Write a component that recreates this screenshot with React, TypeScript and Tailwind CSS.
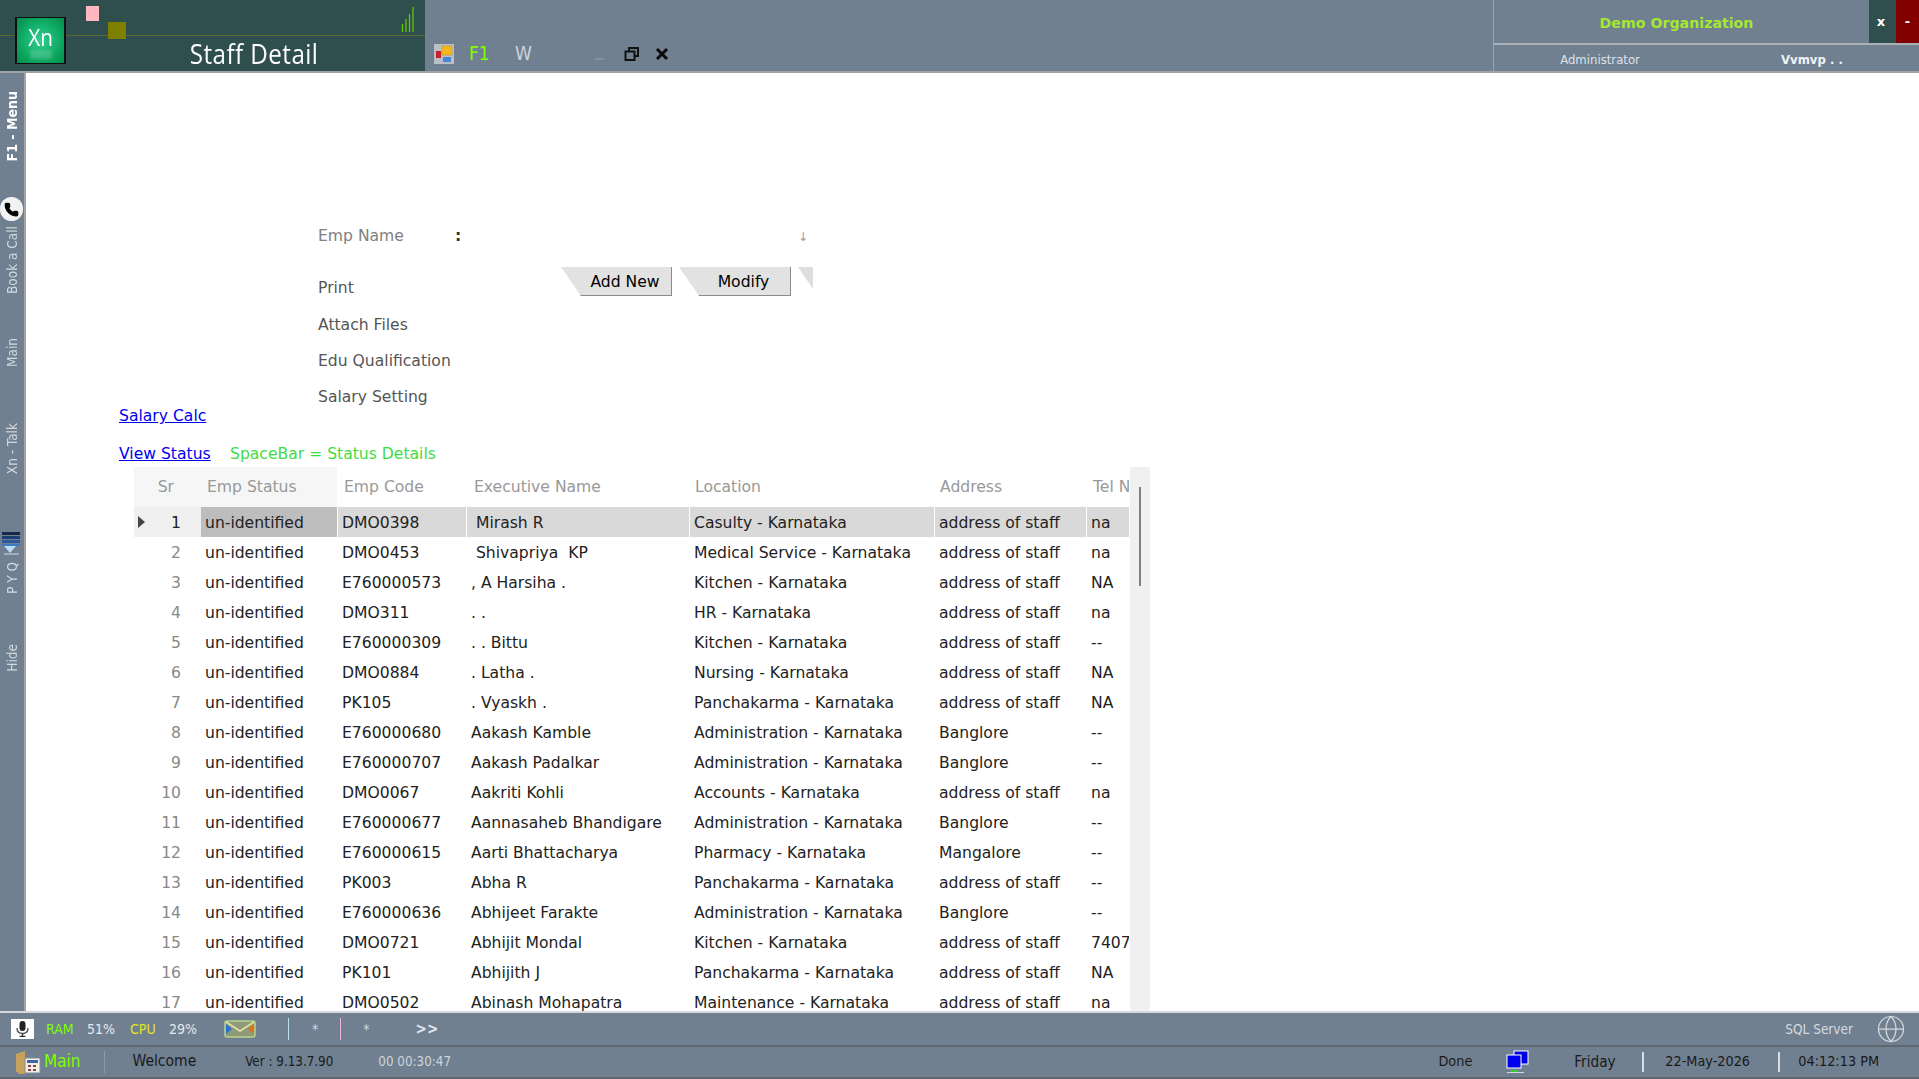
import { Globe, Phone } from "lucide-react";

const rows = [
  ["DMO0398", " Mirash R", "Casulty - Karnataka", "address of staff", "na"],
  ["DMO0453", " Shivapriya  KP", "Medical Service - Karnataka", "address of staff", "na"],
  ["E760000573", ", A Harsiha .", "Kitchen - Karnataka", "address of staff", "NA"],
  ["DMO311", ". .", "HR - Karnataka", "address of staff", "na"],
  ["E760000309", ". . Bittu", "Kitchen - Karnataka", "address of staff", "--"],
  ["DMO0884", ". Latha .", "Nursing - Karnataka", "address of staff", "NA"],
  ["PK105", ". Vyaskh .", "Panchakarma - Karnataka", "address of staff", "NA"],
  ["E760000680", "Aakash Kamble", "Administration - Karnataka", "Banglore", "--"],
  ["E760000707", "Aakash Padalkar", "Administration - Karnataka", "Banglore", "--"],
  ["DMO0067", "Aakriti Kohli", "Accounts - Karnataka", "address of staff", "na"],
  ["E760000677", "Aannasaheb Bhandigare", "Administration - Karnataka", "Banglore", "--"],
  ["E760000615", "Aarti Bhattacharya", "Pharmacy - Karnataka", "Mangalore", "--"],
  ["PK003", "Abha R", "Panchakarma - Karnataka", "address of staff", "--"],
  ["E760000636", "Abhijeet Farakte", "Administration - Karnataka", "Banglore", "--"],
  ["DMO0721", "Abhijit Mondal", "Kitchen - Karnataka", "address of staff", "7407"],
  ["PK101", "Abhijith J", "Panchakarma - Karnataka", "address of staff", "NA"],
  ["DMO0502", "Abinash Mohapatra", "Maintenance - Karnataka", "address of staff", "na"],
];

const colClass = "grid grid-cols-[67px_136px_1px_128px_1px_222px_1px_244px_1px_151px_1px_42px]";
const condensed = "font-['DejaVu_Sans_Condensed',sans-serif]";

function SideLabel({ text, h, bold }: { text: string; h: string; bold?: boolean }) {
  return (
    <div className={`flex items-center justify-center ${h}`}>
      <span className={`[writing-mode:vertical-rl] rotate-180 whitespace-pre ${condensed} ${bold ? "text-[14px] font-bold text-white" : "text-[13.5px] text-[#d3d8de]"}`}>
        {text}
      </span>
    </div>
  );
}

function SideRail() {
  return (
    <aside className="w-[26px] shrink-0 bg-[#708090] border-r-2 border-[#a3a3a3] flex flex-col">
      <SideLabel text="F1 - Menu" h="h-[106px]" bold />
      <div className="h-[18px] shrink-0" />
      <div className="h-[24px] shrink-0 w-[23px] rounded-full bg-[#f2f2f2] flex items-center justify-center">
        <Phone size={15} className="text-black fill-black" />
      </div>
      <SideLabel text="Book a Call" h="h-[72px] mt-[3px]" />
      <SideLabel text="Main" h="h-[72px] mt-[20px]" />
      <SideLabel text="Xn - Talk" h="h-[60px] mt-[31px]" />
      <svg width="20" height="23" viewBox="0 0 20 23" className="mt-[53px] ml-[1px] shrink-0">
        <path d="M1 0h18v3H1z" fill="#16294d" />
        <path d="M1 4h18v3H1z" fill="#1d3f73" />
        <path d="M1 8h18v3H1z" fill="#2a5a9c" />
        <path d="M1 12h18v2H1z" fill="#3f78bd" />
        <path d="M3 14h12l-6 7z" fill="#bcdcf5" />
        <path d="M3 22h15" stroke="#d5dbe2" strokeWidth="1" />
      </svg>
      <SideLabel text="P Y Q" h="h-[32px] mt-[7px]" />
      <SideLabel text="Hide" h="h-[30px] mt-[49px]" />
    </aside>
  );
}

function TopBar() {
  return (
    <header className="h-[73px] shrink-0 bg-[#708090] border-b-2 border-[#a3a3a3] flex relative">
      <div className="w-[425px] bg-[#2f4f4f] flex flex-col relative">
        <div className="h-[36px] border-b border-[#556b2f] flex items-start shrink-0">
          <div className="w-[86px]" />
          <div className="w-[13px] h-[15px] mt-[6px] bg-[#ffb6c1]" />
          <div className="w-[18px] h-[17px] ml-[9px] mt-[22px] bg-[#808000] relative" />
          <div className="ml-auto mr-[9px] mt-[6px]">
            <svg width="15" height="26" viewBox="0 0 15 26" fill="none" stroke="#66cc00" strokeWidth="1.2">
              <path d="M1.5 26V18M5 26V13M8.5 26V8M12 26V1" />
            </svg>
          </div>
        </div>
        <div className="flex-1 flex items-center justify-center pl-[84px]">
          <span className="text-white text-[27.5px] leading-none tracking-[0.5px] font-['Open_Sans',sans-serif] scale-x-[0.88] whitespace-nowrap">
            Staff Detail
          </span>
        </div>
        {/* logo lies over the line of the panel */}
        <div className="absolute left-[15px] top-[17px] w-[51px] h-[47px] border-x-2 border-y border-[#101010] bg-[radial-gradient(circle,#2fd08f_0%,#0aa35c_70%,#078a4c_100%)] flex flex-col items-center overflow-hidden">
          <span className="text-white text-[23px] leading-none mt-[8px] scale-x-90 font-['Open_Sans',sans-serif]">Xn</span>
          <div className="mt-[1px] w-[22px] h-[9px] bg-white/15 blur-[1px]" />
        </div>
      </div>

      <div className="flex items-center h-[71px] pt-[36px]">
        <svg width="20" height="20" viewBox="0 0 20 20" className="ml-[9px]">
          <rect width="20" height="20" fill="#b9bfc5" />
          <rect x="8" y="2" width="10" height="9" fill="#f2b91d" stroke="#c98a10" strokeWidth="0.5" />
          <rect x="2" y="7" width="5" height="7" fill="#c8202a" />
          <rect x="9" y="13" width="8" height="5" fill="#4a86d8" />
        </svg>
        <span className={`ml-[15px] w-[46px] text-[19px] text-[#7fff00] ${condensed}`}>F1</span>
        <span className={`w-[80px] text-[19px] text-[#cdd3da] ${condensed}`}>W</span>
        <div className="w-[9px] h-[2px] mt-[11px] bg-[#85909c]" />
        <svg width="16" height="16" viewBox="0 0 16 16" className="ml-[20px]" fill="none" stroke="#111" strokeWidth="2">
          <rect x="1.5" y="5.5" width="9" height="8.5" />
          <path d="M5 5V2h9v8h-3" />
        </svg>
        <svg width="14" height="14" viewBox="0 0 14 14" className="ml-[15px]" fill="none" stroke="#0a0a0a" strokeWidth="3">
          <path d="M2 2l10 10M12 2L2 12" />
        </svg>
      </div>

      <div className="ml-auto w-[426px] border-l border-[#c8a23f] flex flex-col h-[71px]">
        <div className="h-[45px] shrink-0 border-b-2 border-[#a9b0b8] flex">
          <div className="w-[375px] flex items-center justify-center pt-[4px] pr-[10px] font-bold text-[#a4e832] text-[14.2px]">Demo Organization</div>
          <div className="w-[27px] pr-[3px] bg-[#2f4f4f] text-white font-bold text-[13px] flex items-center justify-center">x</div>
          <div className="w-[23px] bg-[#800000] text-white font-bold text-[13px] flex items-center justify-center">-</div>
        </div>
        <div className={`flex-1 flex items-center pt-[4px] text-[13px] ${condensed}`}>
          <span className="w-[212px] text-center text-[#dde2e8]">Administrator</span>
          <span className="ml-[75px] font-bold text-[#f0f3f6]">Vvmvp . .</span>
        </div>
      </div>
    </header>
  );
}

function Form() {
  return (
    <div className="h-[394px] shrink-0 flex flex-col">
      <div className="h-[152px] shrink-0" />
      <div className="ml-[292px] flex items-center h-[24px] w-[490px] shrink-0 text-[#808080]">
        <span className="w-[137px]">Emp Name</span>
        <span className="text-[#333] font-bold">:</span>
        <span className="ml-auto text-[12px] text-[#999]">↓</span>
      </div>
      <div className="ml-[292px] flex h-[138px] shrink-0 mt-[22px]">
        <div className="w-[243px] flex flex-col text-[#555]">
          <div className="h-[36px] shrink-0 flex items-center">Print</div>
          <div className="h-[37px] shrink-0 flex items-center">Attach Files</div>
          <div className="h-[36px] shrink-0 flex items-center">Edu Qualification</div>
          <div className="h-[22px] mt-[7px] shrink-0 flex items-center whitespace-nowrap">Salary Setting</div>
        </div>
        <div className="flex h-[29px] items-start -mt-[4px]">
          <button className="w-[111px] h-[29px] bg-[#e2e2e2] [clip-path:polygon(0_0,100%_0,100%_100%,18%_100%)] text-black pl-[18px] pt-[3px] border-r border-b border-[#8a8a8a]">Add New</button>
          <button className="ml-[7px] w-[112px] h-[29px] bg-[#e2e2e2] [clip-path:polygon(0_0,100%_0,100%_100%,18%_100%)] text-black pl-[18px] pt-[3px] border-r border-b border-[#8a8a8a]">Modify</button>
          <div className="ml-[7px] w-[15px] h-[22px] bg-[#dedede] [clip-path:polygon(0_0,100%_0,100%_100%)]" />
        </div>
      </div>
      <div className="ml-[93px] h-[20px] -mt-[2px] shrink-0 flex items-center">
        <a href="#" className="text-[#0000ee] underline">Salary Calc</a>
      </div>
      <div className="ml-[93px] h-[20px] mt-[18px] shrink-0 flex items-center">
        <a href="#" className="text-[#0000ee] underline w-[111px]">View Status</a>
        <span className="text-[#3fdc3f]">SpaceBar = Status Details</span>
      </div>
    </div>
  );
}

function Grid() {
  return (
    <div className="ml-[108px] w-[1016px] relative flex-1 overflow-hidden">
      <div className="w-[996px] h-[40px] flex items-center relative text-[#999]">
        <div className={`${colClass} h-[40px] w-full items-center`}>
          <div className="h-full bg-[#f6f6f6] flex items-center justify-end pr-[27px] pt-[1px]">Sr</div>
          <div className="h-full bg-[#f6f6f6] flex items-center pl-[6px] pt-[1px]">Emp Status</div>
          <div />
          <div className="pl-[6px] pt-[1px]">Emp Code</div>
          <div />
          <div className="pl-[7px] pt-[1px]">Executive Name</div>
          <div />
          <div className="pl-[5px] pt-[1px]">Location</div>
          <div />
          <div className="pl-[5px] pt-[1px]">Address</div>
          <div />
          <div className="pl-[6px] pt-[1px] overflow-hidden whitespace-nowrap">Tel No</div>
        </div>
      </div>
      {rows.map((r, i) => (
        <div key={i} className={`${colClass} h-[30px] w-[996px] items-stretch whitespace-pre text-[#222]`}>
          <div className={`flex items-center justify-end pr-[20px] pt-[3px] relative ${i === 0 ? "bg-[#f0f0f0] text-[#222]" : "text-[#888]"}`}>
            {i === 0 && (
              <svg width="7" height="12" viewBox="0 0 7 12" className="absolute left-[4px] top-[9px]">
                <path d="M0 0l7 6-7 6z" fill="#444" />
              </svg>
            )}
            {i + 1}
          </div>
          <div className={`flex items-center pl-[4px] pt-[3px] ${i === 0 ? "bg-[#bdbdbd]" : ""}`}>un-identified</div>
          <div />
          <div className={`flex items-center pl-[4px] pt-[3px] ${i === 0 ? "bg-[#d9d9d9]" : ""}`}>{r[0]}</div>
          <div />
          <div className={`flex items-center pl-[4px] pt-[3px] ${i === 0 ? "bg-[#d9d9d9]" : ""}`}>{r[1]}</div>
          <div />
          <div className={`flex items-center pl-[4px] pt-[3px] ${i === 0 ? "bg-[#d9d9d9]" : ""}`}>{r[2]}</div>
          <div />
          <div className={`flex items-center pl-[4px] pt-[3px] ${i === 0 ? "bg-[#d9d9d9]" : ""}`}>{r[3]}</div>
          <div />
          <div className={`flex items-center pl-[4px] pt-[3px] overflow-hidden ${i === 0 ? "bg-[#d9d9d9]" : ""}`}>{r[4]}</div>
        </div>
      ))}
      {/* scrollbar */}
      <div className="absolute left-[996px] top-0 bottom-0 w-[20px] bg-[#f0f0f0]">
        <div className="absolute left-[9px] top-[20px] w-[2px] h-[99px] bg-[#808080]" />
      </div>
    </div>
  );
}

function BottomBars() {
  return (
    <footer className={`shrink-0 bg-[#708090] border-t-2 border-[#d5d8dc] ${condensed}`}>
      <div className="h-[34px] flex items-center border-b-2 border-[#5f6871] text-[14px]">
        <div className="ml-[11px] w-[23px] h-[20px] bg-white flex items-center justify-center">
          <svg width="15" height="16" viewBox="0 0 15 16">
            <rect x="4.5" y="0" width="6" height="10" rx="3" fill="#222" />
            <path d="M2 7c0 4 2.5 5.5 5.5 5.5S13 11 13 7" fill="none" stroke="#555" strokeWidth="1.4" />
            <path d="M7.5 12.5V15M4.5 15.5h6" stroke="#333" strokeWidth="1.4" />
          </svg>
        </div>
        <span className="ml-[12px] w-[41px] text-[#7fff00]">RAM</span>
        <span className="w-[43px] text-[#e5e8ec]">51%</span>
        <span className="w-[39px] text-[#e6e619]">CPU</span>
        <span className="w-[55px] text-[#e5e8ec]">29%</span>
        <svg width="32" height="18" viewBox="0 0 32 18">
          <rect x="1" y="1" width="30" height="16" rx="2" fill="#8f9a7a" stroke="#b9d48a" strokeWidth="1.5" />
          <path d="M2 2l14 9L30 2" fill="none" stroke="#e6e2a0" strokeWidth="1.5" />
          <path d="M2 4l6 5-6 5z" fill="#2a6fd6" />
          <path d="M30 4l-6 5 6 5z" fill="#e0701a" />
        </svg>
        <div className="ml-[32px] w-[1px] h-[22px] bg-[#b7e3f0]" />
        <span className="ml-[23px] text-[#d5d9de]">*</span>
        <div className="ml-[22px] w-[1px] h-[22px] bg-[#f0b0e0]" />
        <span className="ml-[22px] text-[#d5d9de]">*</span>
        <span className="ml-[46px] font-bold text-[15px] text-[#e2e6ea]">&gt;&gt;</span>
        <span className="ml-auto text-[13.5px] text-[#d5d9de]">SQL Server</span>
        <Globe size={30} strokeWidth={1} className="ml-[23px] mr-[13px] text-[#d5d9de]" />
      </div>
      <div className="h-[32px] flex items-center border-b-2 border-[#5f6871] text-[14.3px] text-[#1a1a1a]">
        <svg width="25" height="23" viewBox="0 0 25 23" className="ml-[16px]">
          <path d="M0 3l9-3v23H3L0 20z" fill="#c6a25c" />
          <rect x="9" y="7" width="15" height="15" fill="#f2efe6" stroke="#7f8c9a" />
          <rect x="11" y="9" width="11" height="3" fill="#3c66a8" />
          <path d="M12 14h3v2h-3zM17 14h3v2h-3zM12 18h3v2h-3zM17 18h3v2h-3z" fill="#8a4040" />
        </svg>
        <span className="ml-[3px] text-[17px] text-[#7fff00]">Main</span>
        <div className="ml-[23px] w-[1px] h-[22px] bg-[#8e9aa6]" />
        <span className="ml-[28px] text-[15.5px]">Welcome</span>
        <span className="ml-[49px] text-[13.3px]">Ver : 9.13.7.90</span>
        <span className="ml-[45px] text-[13.3px] text-[#cfd4da]">00 00:30:47</span>
        <span className="ml-auto">Done</span>
        <svg width="23" height="24" viewBox="0 0 23 24" className="ml-[34px]">
          <rect x="8" y="1" width="14" height="13" fill="#0000e0" stroke="#fff" />
          <rect x="1" y="5" width="14" height="13" fill="#0000f0" stroke="#fff" />
          <path d="M5 20h7v2H5z" fill="#33cc33" />
          <path d="M1 22h17v1H1z" fill="#d5d9de" />
        </svg>
        <span className="ml-[45px] w-[68px] text-[15.2px]">Friday</span>
        <div className="w-[2px] h-[20px] bg-[#d8dce0]" />
        <span className="ml-[21px] w-[113px]">22-May-2026</span>
        <div className="w-[2px] h-[20px] bg-[#d8dce0]" />
        <span className="ml-[18px] mr-[40px]">04:12:13 PM</span>
      </div>
    </footer>
  );
}

export default function App() {
  return (
    <div className="w-[1919px] h-[1079px] flex flex-col overflow-hidden bg-white text-[15.6px] font-['DejaVu_Sans','Noto_Sans',sans-serif]">
      <TopBar />
      <div className="flex-1 flex min-h-0">
        <SideRail />
        <main className="flex-1 flex flex-col min-w-0 relative">
          <Form />
          <Grid />
        </main>
      </div>
      <BottomBars />
    </div>
  );
}
